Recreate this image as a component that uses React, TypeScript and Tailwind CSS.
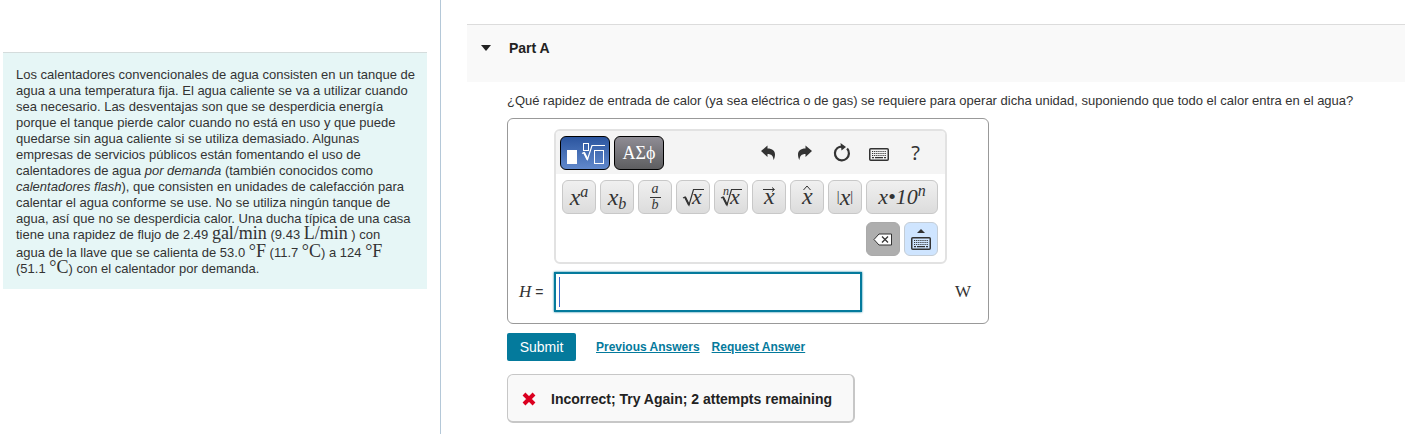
import React from "react";
import { clsx } from "clsx";

function Unit({ tall, children }: { tall?: boolean; children: React.ReactNode }) {
  return (
    <span className={clsx("font-['Liberation_Serif',serif] text-lg", tall ? "leading-4" : "leading-0")}>{children}</span>
  );
}

function KeyboardIcon() {
  return (
    <svg width="20" height="13" viewBox="0 0 20 13" fill="none" stroke="currentColor">
      <rect x="0.75" y="0.75" width="18.5" height="11.5" rx="1" strokeWidth="1.5" />
      <path d="M3 3.5h14M3 5.5h14M3 7.5h14" strokeWidth="1.2" strokeDasharray="1.2 0.9" />
      <path d="M3 9.7h2M6 9.7h8M15 9.7h2" strokeWidth="1.3" />
    </svg>
  );
}

function UndoIcon({ flipped }: { flipped?: boolean }) {
  return (
    <svg
      width="14"
      height="16"
      viewBox="0 0 14 16"
      fill="currentColor"
      className={clsx(flipped && "-scale-x-100")}
    >
      <path d="M0 6 6.500 .5v3c5 0 7.500 2.500 7.500 6 0 2.200-.6 4.200-1.500 5.500C12.300 11 10.500 9 6.500 9v3z" />
    </svg>
  );
}

function ResetIcon() {
  return (
    <svg width="18" height="19" viewBox="0 0 18 19" fill="none">
      <path d="M10 3.700A7 7 0 0 0 4.400 5a7 7 0 1 0 9.700 .6" stroke="currentColor" strokeWidth="2.200" />
      <path d="M7.500 0l5.500 4-4.500 3.500z" fill="currentColor" />
    </svg>
  );
}

function TemplatesIcon() {
  return (
    <svg width="40" height="24" viewBox="0 0 40 24" fill="none" stroke="#fff">
      <rect x="2" y="9" width="10" height="14" fill="#fff" stroke="none" />
      <rect x="18.500" y="2.500" width="5" height="7" />
      <path d="M17 12.500l2-1 3.500 7L27 4.500h13" strokeWidth="1.200" />
      <path d="M19 11.500l3.500 7" strokeWidth="2" />
      <rect x="29.500" y="9.500" width="9" height="13" />
    </svg>
  );
}

function Root({ index }: { index?: boolean }) {
  return (
    <svg width="24" height="24" viewBox="0 0 24 24" fill="none" stroke="currentColor">
      <path d="M2 13l2-1 4 8L12.500 4.500H23" strokeWidth="1.200" />
      <path d="M4 12l4 8" strokeWidth="2" />
      <text x="11" y="19" className="fill-current stroke-none font-['Liberation_Serif',serif] text-[22px] italic">
        x
      </text>
      {index && (
        <text x="4" y="10" className="fill-current stroke-none font-['Liberation_Serif',serif] text-xs italic">
          n
        </text>
      )}
    </svg>
  );
}

function Vector({ hat }: { hat?: boolean }) {
  return (
    <svg width="20" height="28" viewBox="0 0 20 28" fill="none" stroke="currentColor">
      <text x="5" y="21" className="fill-current stroke-none font-['Liberation_Serif',serif] text-2xl italic">
        x
      </text>
      {hat ? <path d="M6.500 7l3.500-4 3.500 4" /> : <path d="M4 6.500h11M13 4.500l2.500 2-2.500 2" />}
    </svg>
  );
}

type KeyProps = { label: string; wide?: boolean; tone?: "gray" | "blue"; children: React.ReactNode };

function Key({ label, wide, tone, children }: KeyProps) {
  return (
    <button
      type="button"
      aria-label={label}
      className={clsx(
        "flex h-[34px] items-center justify-center rounded-md border font-['Liberation_Serif',serif] text-2xl italic leading-none text-[#333]",
        wide ? "w-[72px]" : "w-[34px]",
        !tone && "border-[#c8c8c8] bg-linear-to-b from-[#f0f0f0] to-[#dcdcdc]",
        tone === "gray" && "border-[#aaa] bg-[#aeaeae]",
        tone === "blue" && "border-[#c4cdd6] bg-[#cfe5ff]"
      )}
    >
      {children}
    </button>
  );
}

function Tool({ label, children }: { label: string; children: React.ReactNode }) {
  return (
    <button type="button" aria-label={label} className="flex h-[34px] w-[37px] items-center justify-center text-[#333]">
      {children}
    </button>
  );
}

function MathToolbar() {
  return (
    <div className="w-[393px] rounded-md border-2 border-[#e2e2e2] bg-white">
      <div className="flex h-[43px] items-center gap-1 rounded-t bg-[#f4f4f4] px-1">
        <button
          type="button"
          aria-label="Templates"
          className="flex h-[34px] w-[50px] items-center justify-center rounded-md border border-black bg-linear-to-b from-[#2b559f] to-[#6189cc]"
        >
          <TemplatesIcon />
        </button>
        <button
          type="button"
          className="h-[34px] w-[50px] rounded-md border border-black bg-linear-to-b from-[#8f8d95] to-[#5e5e60] font-['Liberation_Serif',serif] text-lg leading-none text-white"
        >
          ΑΣϕ
        </button>
        <div className="mr-[7px] ml-auto flex">
          <Tool label="Undo"><UndoIcon /></Tool>
          <Tool label="Redo"><UndoIcon flipped /></Tool>
          <Tool label="Reset"><ResetIcon /></Tool>
          <Tool label="Keyboard shortcuts"><span className="pt-1"><KeyboardIcon /></span></Tool>
          <Tool label="Help"><span className="font-['Noto_Sans',sans-serif] text-xl">?</span></Tool>
        </div>
      </div>
      <div className="flex flex-wrap justify-end gap-x-1 gap-y-2 py-1.5 pr-[7px] pl-1">
        <Key label="Superscript">
          <span>x<sup className="text-base leading-0">a</sup></span>
        </Key>
        <Key label="Subscript">
          <span>x<sub className="text-base leading-0">b</sub></span>
        </Key>
        <Key label="Fraction">
          <span className="flex flex-col text-sm leading-3">
            <span className="border-b border-current px-0.5 pb-0.5">a</span>
            <span className="pt-px">b</span>
          </span>
        </Key>
        <Key label="Square root"><Root /></Key>
        <Key label="Nth root"><Root index /></Key>
        <Key label="Vector"><Vector /></Key>
        <Key label="Unit vector"><Vector hat /></Key>
        <Key label="Absolute value">
          <span className="text-sm not-italic">|</span>x<span className="text-sm not-italic">|</span>
        </Key>
        <Key label="Scientific notation" wide>
          <span className="text-[22px]">x•10<sup className="text-base leading-0">n</sup></span>
        </Key>
        <Key label="Delete" tone="gray">
          <svg width="20" height="13" viewBox="0 0 20 13" stroke="#333">
            <path d="M6 1h12.500v11H6L1 6.500z" fill="#fff" />
            <path d="M9 3.500l6 6M15 3.500l-6 6" strokeWidth="1.300" />
          </svg>
        </Key>
        <Key label="Toggle keypad" tone="blue">
          <span className="flex flex-col items-center gap-1">
            <svg width="8" height="4" viewBox="0 0 8 4" fill="currentColor"><path d="M0 4l4-4 4 4z" /></svg>
            <KeyboardIcon />
          </span>
        </Key>
      </div>
    </div>
  );
}

function Problem() {
  return (
    <p className="mt-[52px] mr-[13px] ml-[3px] border-t border-[#d4dcdc] bg-[#e6f6f6] pt-3.5 pr-2 pb-3 pl-[13px] text-[13px] leading-4">
      Los calentadores convencionales de agua consisten en un tanque de agua a una temperatura fija. El agua
      caliente se va a utilizar cuando sea necesario. Las desventajas son que se desperdicia energía porque el
      tanque pierde calor cuando no está en uso y que puede quedarse sin agua caliente si se utiliza demasiado.
      Algunas empresas de servicios públicos están fomentando el uso de calentadores de agua{" "}
      <em>por demanda</em> (también conocidos como <em>calentadores flash</em>), que consisten en unidades de
      calefacción para calentar el agua conforme se use. No se utiliza ningún tanque de agua, así que no se
      desperdicia calor. Una ducha típica de una casa tiene una rapidez de flujo de 2.49 <Unit>gal/min</Unit>{" "}
      (9.43 <Unit>L/min</Unit> ) con
      <br />
      agua de la llave que se calienta de 53.0 <Unit tall>°F</Unit> (11.7 <Unit>°C</Unit>) a 124 <Unit>°F</Unit>
      <br />
      (51.1 <Unit>°C</Unit>) con el calentador por demanda.
    </p>
  );
}

export default function App() {
  return (
    <div className="flex min-h-screen bg-white font-['Liberation_Sans',Arial,sans-serif] text-[#333]">
      <aside className="w-[441px] shrink-0 border-r border-[#b4c8d8]">
        <Problem />
      </aside>
      <main className="min-w-0 flex-1 pt-6 pl-[26px]">
        <h2 className="h-[58px] border-t border-[#dcdcdc] bg-[#f9f9f9] pt-[13px] pl-3.5 text-sm font-bold text-[#222]">
          <button type="button" className="flex items-center">
            <svg width="10" height="6" viewBox="0 0 10 6" fill="currentColor" className="mr-[18px]">
              <path d="M0 0h10L5 6z" />
            </svg>
            Part A
          </button>
        </h2>
        <div className="pl-10">
          <p className="mt-[11px] text-[13px] leading-4">
            ¿Qué rapidez de entrada de calor (ya sea eléctrica o de gas) se requiere para operar dicha unidad,
            suponiendo que todo el calor entra en el agua?
          </p>
          <section className="mt-[9px] w-[482px] max-w-full rounded-md border border-[#999] pt-2.5 pb-[11px]">
            <div className="ml-[46px]">
              <MathToolbar />
            </div>
            <div className="mt-2 flex items-center">
              <label htmlFor="heat" className="w-[46px] pl-[11px] text-sm">
                <i className="font-['Liberation_Serif',serif] text-[17px]">H</i> =
              </label>
              <div className="relative">
                <input
                  id="heat"
                  type="text"
                  className="block h-10 w-[308px] border-2 border-[#047a9c] px-1 shadow-[0_0_2px_#047a9c] outline-none"
                />
                <span aria-hidden="true" className="absolute top-[5px] left-[5px] h-[30px] w-px bg-[#3366cc]" />
              </div>
              <span className="ml-auto pr-[17px] font-['Liberation_Serif',serif] text-[17px]">W</span>
            </div>
          </section>
          <div className="mt-[9px] flex items-center text-xs font-bold text-[#047a9c]">
            <button type="button" className="h-7 w-[69px] rounded-xs bg-[#047a9c] text-sm font-normal text-white">
              Submit
            </button>
            <a href="#previous" className="ml-5 underline">Previous Answers</a>
            <a href="#request" className="ml-3 underline">Request Answer</a>
          </div>
          <div
            role="status"
            className="mt-[13px] flex h-[49px] w-[348px] items-center rounded-md border border-r-2 border-b-2 border-[#c7c7c7] bg-[#f9f9f9] pt-px pl-3.5 text-sm font-bold text-[#222]"
          >
            <svg width="14" height="14" viewBox="0 0 14 14" stroke="#db0020" strokeWidth="4" className="mr-[15px]">
              <path d="M2 2l10 10M12 2L2 12" />
            </svg>
            Incorrect; Try Again; 2 attempts remaining
          </div>
        </div>
      </main>
    </div>
  );
}
